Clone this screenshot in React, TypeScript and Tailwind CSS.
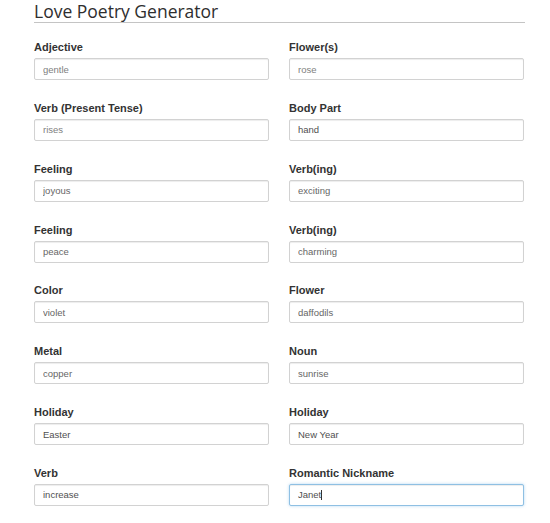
import React from "react";

type Field = { label: string; value: string; tone?: "light" | "dark" };

const left: Field[] = [
  { label: "Adjective", value: "gentle", tone: "light" },
  { label: "Verb (Present Tense)", value: "rises", tone: "light" },
  { label: "Feeling", value: "joyous" },
  { label: "Feeling", value: "peace" },
  { label: "Color", value: "violet" },
  { label: "Metal", value: "copper" },
  { label: "Holiday", value: "Easter", tone: "dark" },
  { label: "Verb", value: "increase", tone: "dark" },
];

const right: Field[] = [
  { label: "Flower(s)", value: "rose", tone: "light" },
  { label: "Body Part", value: "hand", tone: "dark" },
  { label: "Verb(ing)", value: "exciting" },
  { label: "Verb(ing)", value: "charming" },
  { label: "Flower", value: "daffodils" },
  { label: "Noun", value: "sunrise" },
  { label: "Holiday", value: "New Year", tone: "dark" },
  { label: "Romantic Nickname", value: "Janet", tone: "dark" },
];

function toneClass(t?: "light" | "dark") {
  if (t === "light") return "text-[#808080]";
  if (t === "dark") return "text-[#505050]";
  return "text-[#666666]";
}

function FieldBox({ f, focused }: { f: Field; focused?: boolean }) {
  return (
    <label className="flex flex-col">
      <span className="block h-[15px] mb-[3px] text-[11px] leading-[15px] font-bold text-[#333333] font-['Liberation_Sans',Arial,sans-serif]">
        {f.label}
      </span>
      <span className="relative block">
        <input
          readOnly
          value={f.value}
          className={
            focused
              ? "block w-full h-[22px] px-[8px] rounded-[2px] border border-[#8fc0e3] bg-white text-[9.5px] outline-none shadow-[inset_0_1px_1px_rgba(0,0,0,0.075),0_0_3px_rgba(102,175,233,0.5)] font-['Liberation_Sans',Arial,sans-serif] " +
                toneClass(f.tone)
              : "block w-full h-[22px] px-[8px] rounded-[2px] border border-[#d2d2d2] bg-white text-[9.5px] outline-none shadow-[inset_0_1px_1px_rgba(0,0,0,0.075)] font-['Liberation_Sans',Arial,sans-serif] " +
                toneClass(f.tone)
          }
        />
        {focused && (
          <span className="absolute left-[32px] top-[6px] w-px h-[10px] bg-[#333333]" />
        )}
      </span>
    </label>
  );
}

export default function App() {
  return (
    <div className="w-[550px] h-[523px] bg-white pl-[34px] overflow-hidden">
      <div className="w-[491px]">
        <h1 className="h-[23px] border-b border-[#c4c4c4] text-[17.5px] leading-[22px] font-normal text-[#2e2e2e] font-['Open_Sans',sans-serif]">
          Love Poetry Generator
        </h1>
        <div className="mt-[17px] grid grid-cols-[235px_235px] gap-x-[20px] gap-y-[20.85px]">
          {left.map((lf, i) => (
            <React.Fragment key={i}>
              <FieldBox f={lf} />
              <FieldBox f={right[i]} focused={i === left.length - 1} />
            </React.Fragment>
          ))}
        </div>
      </div>
    </div>
  );
}
